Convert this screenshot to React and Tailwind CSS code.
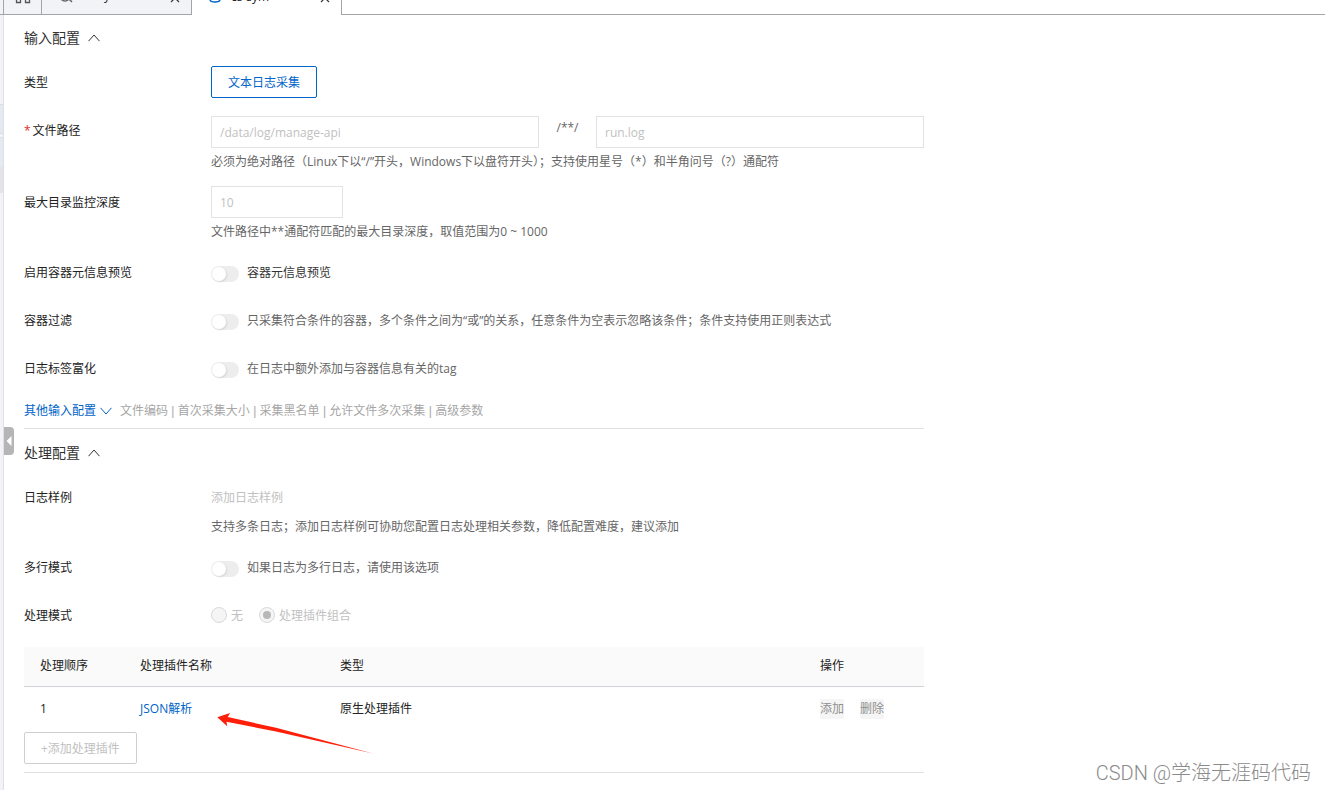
import React from 'react';

const fontStack = "font-['Open_Sans','Noto_Sans_CJK_SC',sans-serif]";

const otherInputs = ['文件编码', '首次采集大小', '采集黑名单', '允许文件多次采集', '高级参数'];

const plugins = [{ order: 1, name: 'JSON解析', type: '原生处理插件' }];

const Chevron = ({ down = false }) => (
  <svg width="12" height="8" viewBox="0 0 12 8" fill="none" stroke="currentColor" aria-hidden="true">
    <path d={down ? 'M0.5 0.8 L6 7 L11.5 0.8' : 'M0.5 7.2 L6 1 L11.5 7.2'} />
  </svg>
);

const CloseIcon = () => (
  <svg width="10" height="10" viewBox="0 0 10 10" fill="none" stroke="#333" strokeWidth="1.2" aria-hidden="true">
    <path d="M1 1 L9 9 M9 1 L1 9" />
  </svg>
);

const SectionTitle = ({ children }) => (
  <h2 className="mb-[18px] text-sm leading-5 text-[#333]">
    <button type="button" aria-expanded="true" className="flex items-center gap-2">
      {children}
      <Chevron />
    </button>
  </h2>
);

const Row = ({ label, htmlFor, required, children }) => (
  <div className="grid grid-cols-[187px_minmax(0,1fr)]">
    <label htmlFor={htmlFor} className={required ? 'leading-[30px]' : 'leading-[34px]'}>
      {required && <span className="mr-0.5 text-[#d93026]">*</span>}
      {label}
    </label>
    <div>{children}</div>
  </div>
);

const Hint = ({ children }) => <p className="mt-1 leading-5 text-[#666]">{children}</p>;

const TextInput = ({ className = 'w-full', ...props }) => (
  <input
    type="text"
    disabled
    className={`h-8 border border-[#e3e3e3] bg-white px-2 text-[#c1c1c1] ${className}`}
    {...props}
  />
);

const SwitchRow = ({ id, label, text, dark }) => (
  <Row label={label} htmlFor={id}>
    <div className="flex h-[34px] items-center gap-2">
      <input
        id={id}
        type="checkbox"
        role="switch"
        disabled
        className="mt-0.5 flex h-4 w-7 shrink-0 appearance-none items-center rounded-full bg-[#ededed] pl-px before:size-3.5 before:rounded-full before:bg-white before:shadow-[1px_1px_2px_rgba(0,0,0,0.1)]"
      />
      <span className={dark ? 'text-[#333]' : 'text-[#666]'}>{text}</span>
    </div>
  </Row>
);

const RadioOption = ({ label, checked = false }) => (
  <label className="flex items-center gap-1 text-[#c1c1c1]">
    <input
      type="radio"
      name="mode"
      disabled
      defaultChecked={checked}
      className="flex size-4 appearance-none items-center justify-center rounded-full border border-[#d9d9d9] bg-[#f5f5f5] checked:before:size-2 checked:before:rounded-full checked:before:bg-[#b8b8b8]"
    />
    <span className="pt-0.5">{label}</span>
  </label>
);

const TabBar = () => (
  <header className="flex h-[15px] items-end overflow-hidden">
    <div className="h-8 w-1 border-r border-b border-[#a3a4a8] bg-[#f2f3f7]" />
    <button
      type="button"
      aria-label="首页"
      className="flex h-8 w-[38px] items-center justify-center border-r border-b border-[#a3a4a8] bg-[#f2f3f7] pb-1.5"
    >
      <svg width="16" height="16" viewBox="0 0 16 16" fill="none" stroke="#555" strokeWidth="1.3" aria-hidden="true">
        <path d="M1.5 1.5h4v4h-4z M10.5 1.5h4v4h-4z M1.5 10.5h4v4h-4z M10.5 10.5h4v4h-4z" />
      </svg>
    </button>
    <div className="flex h-8 w-[150px] items-center border-r border-b border-[#a3a4a8] bg-[#f2f3f7] px-[11px] pb-0.5">
      <svg width="26" height="14" viewBox="0 0 26 14" fill="none" stroke="#666" strokeWidth="1.5" aria-hidden="true">
        <circle cx="12" cy="5" r="5" />
        <path d="M15.5 7.5 L19 11" />
      </svg>
      <span className="ml-1 flex-1 pb-1 leading-4">cs-sys</span>
      <button type="button" aria-label="关闭">
        <CloseIcon />
      </button>
    </div>
    <div className="flex h-8 w-[150px] items-center border-r border-[#a3a4a8] bg-white px-[11px] pb-0.5">
      <svg width="24" height="14" viewBox="0 0 24 14" fill="none" stroke="#0064c8" strokeWidth="1.4" aria-hidden="true">
        <path d="M7 2v6.500c0 1.400 2.200 2.500 5 2.500s5-1.100 5-2.500V2" />
      </svg>
      <span className="ml-1 flex-1 pb-0.5 leading-4">cs-sym</span>
      <button type="button" aria-label="关闭">
        <CloseIcon />
      </button>
    </div>
    <div className="h-8 flex-1 border-b border-[#a3a4a8]" />
  </header>
);

const SideRail = () => (
  <aside className="relative w-1 shrink-0 border-r border-[#dfe0e3] bg-[#f2f3f7] pt-[89px]">
    <div className="h-[30px] border-y border-[#dcdee3] bg-[#e5e9f2]" />
    <div className="mt-[3px] h-[30px] border-t border-[#dcdee3] bg-[#e5e9f2]" />
    <div className="h-[26px] bg-[#e4e4e8]" />
    <button
      type="button"
      aria-label="收起"
      className="absolute top-[412px] left-1 flex h-7 w-2.5 items-center justify-center rounded-r-sm bg-[#b5b5b5]"
    >
      <svg width="6" height="10" viewBox="0 0 6 10" fill="#fff" aria-hidden="true">
        <path d="M5.500 0 L0.500 5 L5.500 10z" />
      </svg>
    </button>
  </aside>
);

const InputConfig = () => (
  <section className="border-b border-[#e0e0e0] pt-[13px] pb-1.5">
    <SectionTitle>输入配置</SectionTitle>
    <div className="mb-4">
      <Row label="类型">
        <button type="button" className="h-8 rounded-xs border border-[#0064c8] px-4 pt-0.5 text-[#0064c8]">
          文本日志采集
        </button>
      </Row>
    </div>
    <div className="space-y-3.5">
      <Row label="文件路径" htmlFor="path" required>
        <div className="flex">
          <TextInput id="path" defaultValue="/data/log/manage-api" className="min-w-0 flex-1" />
          <span className="w-[57px] text-center leading-6 text-[#666]">/**/</span>
          <TextInput aria-label="文件名" defaultValue="run.log" className="min-w-0 flex-1" />
        </div>
        <Hint>必须为绝对路径（Linux下以“/”开头，Windows下以盘符开头）；支持使用星号（*）和半角问号（?）通配符</Hint>
      </Row>
      <Row label="最大目录监控深度" htmlFor="depth">
        <TextInput id="depth" defaultValue="10" className="block w-[132px]" />
        <Hint>文件路径中**通配符匹配的最大目录深度，取值范围为0 ~ 1000</Hint>
      </Row>
      <SwitchRow id="preview" label="启用容器元信息预览" text="容器元信息预览" dark />
      <SwitchRow
        id="filter"
        label="容器过滤"
        text="只采集符合条件的容器，多个条件之间为“或”的关系，任意条件为空表示忽略该条件；条件支持使用正则表达式"
      />
      <SwitchRow id="tags" label="日志标签富化" text="在日志中额外添加与容器信息有关的tag" />
      <div className="flex items-center gap-2 leading-[22px]">
        <button type="button" aria-expanded="false" className="flex items-center gap-1 text-[#0064c8]">
          其他输入配置
          <Chevron down />
        </button>
        <span className="font-['Liberation_Sans','Noto_Sans_CJK_SC',sans-serif] text-[#a6a6a6]">
          {otherInputs.join(' | ')}
        </span>
      </div>
    </div>
  </section>
);

const PluginTable = () => (
  <div className="relative">
    <table className="w-full table-fixed text-left">
      <thead>
        <tr className="h-[39px] border-b border-[#d2d3d8] bg-[#fafafa]">
          <th className="w-[100px] px-4 font-normal">处理顺序</th>
          <th className="w-[200px] px-4 font-normal">处理插件名称</th>
          <th className="px-4 font-normal">类型</th>
          <th className="w-[120px] px-4 font-normal">操作</th>
        </tr>
      </thead>
      <tbody>
        {plugins.map((plugin) => (
          <tr key={plugin.order} className="h-[46px]">
            <td className="px-4">{plugin.order}</td>
            <td className="px-4">
              <a href="#plugin" className="text-[#0064c8]">
                {plugin.name}
              </a>
            </td>
            <td className="px-4">{plugin.type}</td>
            <td className="px-4">
              <div className="flex gap-4 leading-5 text-[#8f8f8f]">
                <button type="button" disabled className="rounded-xs bg-[#f5f5f5]">
                  添加
                </button>
                <button type="button" disabled className="rounded-xs bg-[#f5f5f5]">
                  删除
                </button>
              </div>
            </td>
          </tr>
        ))}
      </tbody>
    </table>
    <svg
      width="158"
      height="44"
      viewBox="0 0 158 44"
      fill="#ff1e0a"
      className="pointer-events-none absolute top-[65px] left-[192px]"
      aria-hidden="true"
    >
      <path d="M1.300 5.300 L14 1 L11.800 5.100 L60 15.800 L157 41.600 L60 19.400 L10.500 9.800 L11.200 14.300z" />
    </svg>
  </div>
);

const ProcessConfig = () => (
  <section className="border-b border-[#e0e0e0] pt-3.5 pb-2">
    <SectionTitle>处理配置</SectionTitle>
    <div className="space-y-3.5">
      <Row label="日志样例">
        <button type="button" disabled className="block h-8 pt-0.5 text-[#c1c1c1]">
          添加日志样例
        </button>
        <Hint>支持多条日志；添加日志样例可协助您配置日志处理相关参数，降低配置难度，建议添加</Hint>
      </Row>
      <SwitchRow id="multiline" label="多行模式" text="如果日志为多行日志，请使用该选项" />
      <Row label="处理模式">
        <div className="flex h-8 items-center gap-4">
          <RadioOption label="无" />
          <RadioOption label="处理插件组合" checked />
        </div>
      </Row>
      <PluginTable />
    </div>
    <button type="button" disabled className="block h-8 rounded-xs border border-[#cfcfcf] px-4 pt-0.5 text-[#c1c1c1]">
      +添加处理插件
    </button>
  </section>
);

const App = () => (
  <div className={`relative flex min-h-screen flex-col bg-white text-xs text-[#222] ${fontStack}`}>
    <TabBar />
    <div className="flex flex-1">
      <SideRail />
      <main className="w-full max-w-[940px] min-w-0 px-5">
        <InputConfig />
        <ProcessConfig />
      </main>
    </div>
    <div className="absolute right-3.5 bottom-0.5 font-['Roboto','Noto_Sans_CJK_SC',sans-serif] text-xl leading-[30px] font-light text-[#8a8a8a]">
      CSDN @学海无涯码代码
    </div>
  </div>
);

export default App;
